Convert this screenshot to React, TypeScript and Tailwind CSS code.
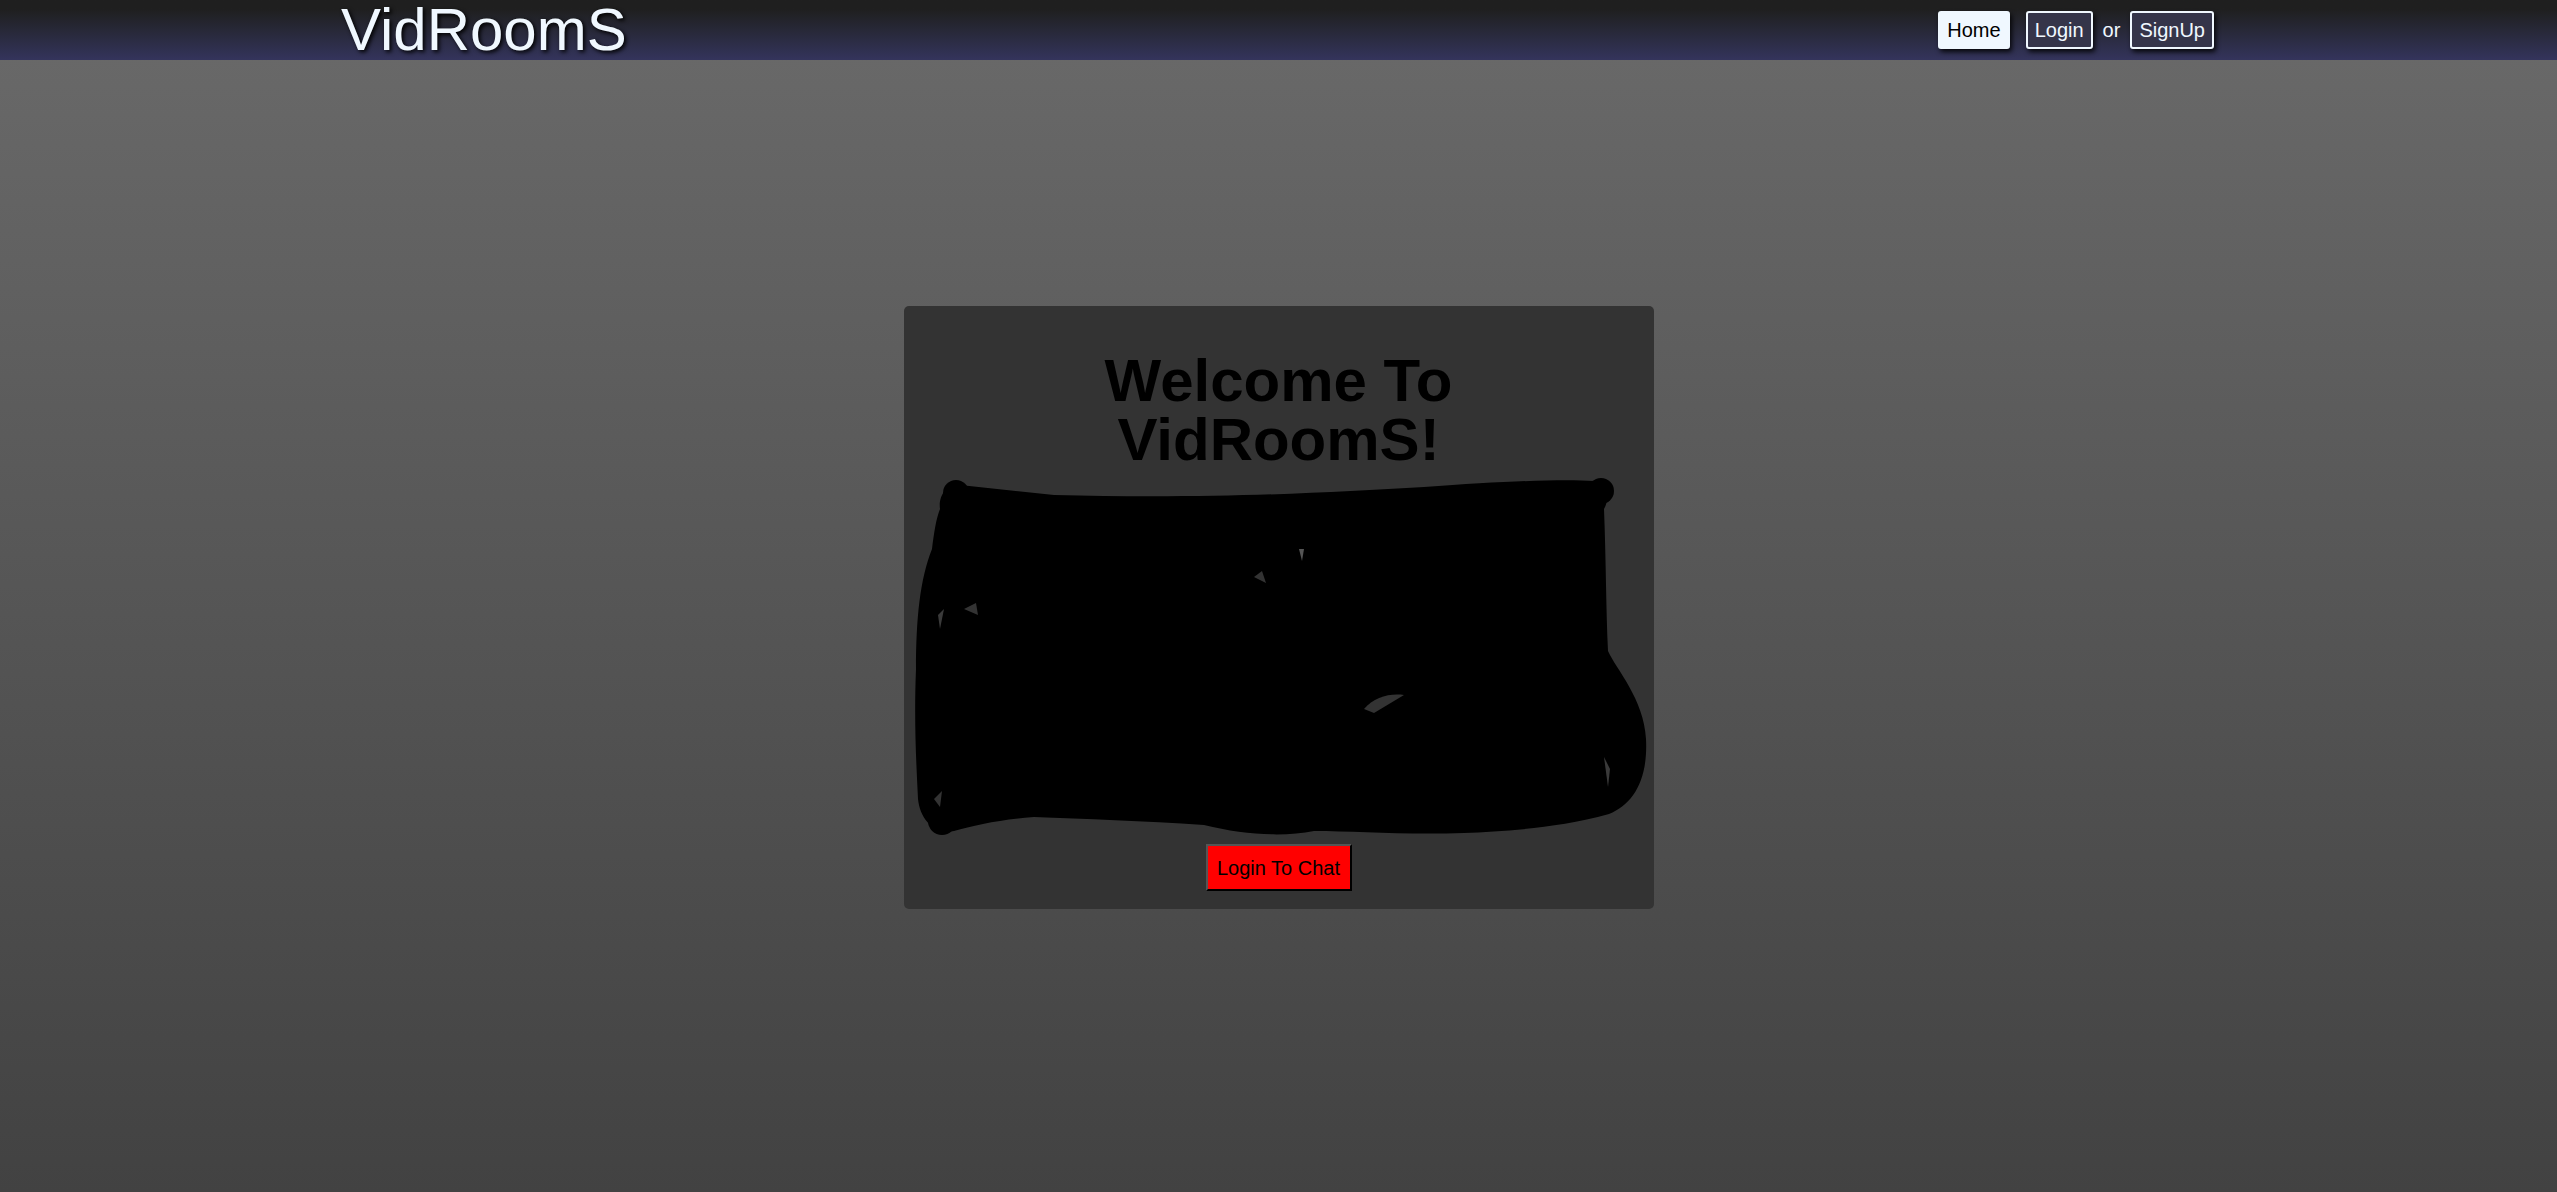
import React from "react";

const font = "font-['Liberation_Sans',Arial,sans-serif]";

function NavButton({ label, active }: { label: string; active?: boolean }) {
  return (
    <button
      type="button"
      className={
        "h-[38px] rounded-[3px] border-2 px-[7px] text-[20px] leading-[23px] shadow-[2px_3px_5px_rgba(0,0,0,0.85)] " +
        (active
          ? "border-[#f0f8ff] bg-[#f0f8ff] text-black"
          : "border-[#f0f8ff] bg-[#35354a] text-[#f0f8ff]")
      }
    >
      {label}
    </button>
  );
}

function Scribble() {
  return (
    <svg
      viewBox="0 0 750 374"
      className="block h-[374px] w-[750px]"
      aria-hidden="true"
    >
      <path
        d="M36 40 C34 26 44 14 56 16 L150 26 C300 30 420 24 520 18 C600 12 660 10 690 12 C704 14 706 30 700 40 C702 90 702 140 704 182 C712 200 740 230 742 270 C744 310 730 335 705 345 C650 360 600 362 560 364 C500 366 450 362 410 362 C380 368 340 366 300 356 C240 352 180 350 130 348 C100 350 70 356 50 362 C30 366 16 350 14 330 C12 290 10 250 12 200 C12 150 16 110 28 80 C30 64 32 50 36 40 Z"
        fill="#000"
      />
      <circle cx="52" cy="24" r="13" fill="#000" />
      <circle cx="38" cy="352" r="14" fill="#000" />
      <circle cx="697" cy="22" r="13" fill="#000" />
      <path d="M34 146 L40 140 L36 160 Z" fill="#3a3a3a" />
      <path d="M700 288 L706 300 L704 318 Z" fill="#3a3a3a" />
      <path d="M460 240 C470 228 486 224 500 226 L470 244 Z" fill="#333" />
      <path d="M60 140 L72 134 L74 146 Z" fill="#333" />
      <path d="M350 108 L358 102 L362 114 Z" fill="#333" />
      <path d="M395 80 L400 80 L398 92 Z" fill="#555" />
      <path d="M30 330 L38 322 L36 338 Z" fill="#333" />
    </svg>
  );
}

export default function App() {
  return (
    <div
      className={
        font +
        " min-h-[1192px] w-full bg-linear-to-b from-[#6a6a6a] to-[#424242]"
      }
    >
      <header className="flex h-[60px] items-center justify-between bg-linear-to-b from-[#1f1f1f] from-15% to-[#34345c] pl-[341px] pr-[343px]">
        <h1 className="text-[60px] leading-[60px] text-[#f0f8ff] [text-shadow:2px_2px_4px_#000]">
          VidRoomS
        </h1>
        <nav className="flex items-center">
          <NavButton label="Home" active />
          <div className="ml-[16px]">
            <NavButton label="Login" />
          </div>
          <span className="mx-[10px] text-[20px] text-[#f0f8ff]">or</span>
          <NavButton label="SignUp" />
        </nav>
      </header>

      <main className="flex justify-center pt-[246px]">
        <div className="flex h-[603px] w-[750px] flex-col items-center rounded-[5px] bg-[#333333]">
          <h2 className="mt-[45px] text-center text-[60px] font-bold leading-[59px] text-black">
            Welcome To
            <br />
            VidRoomS!
          </h2>
          <Scribble />
          <button
            type="button"
            className="mt-px h-[47px] w-[146px] border-2 border-t-[#555] border-l-[#555] border-b-black border-r-black bg-[#ff0000] text-[20px] text-black"
          >
            Login To Chat
          </button>
        </div>
      </main>
    </div>
  );
}
